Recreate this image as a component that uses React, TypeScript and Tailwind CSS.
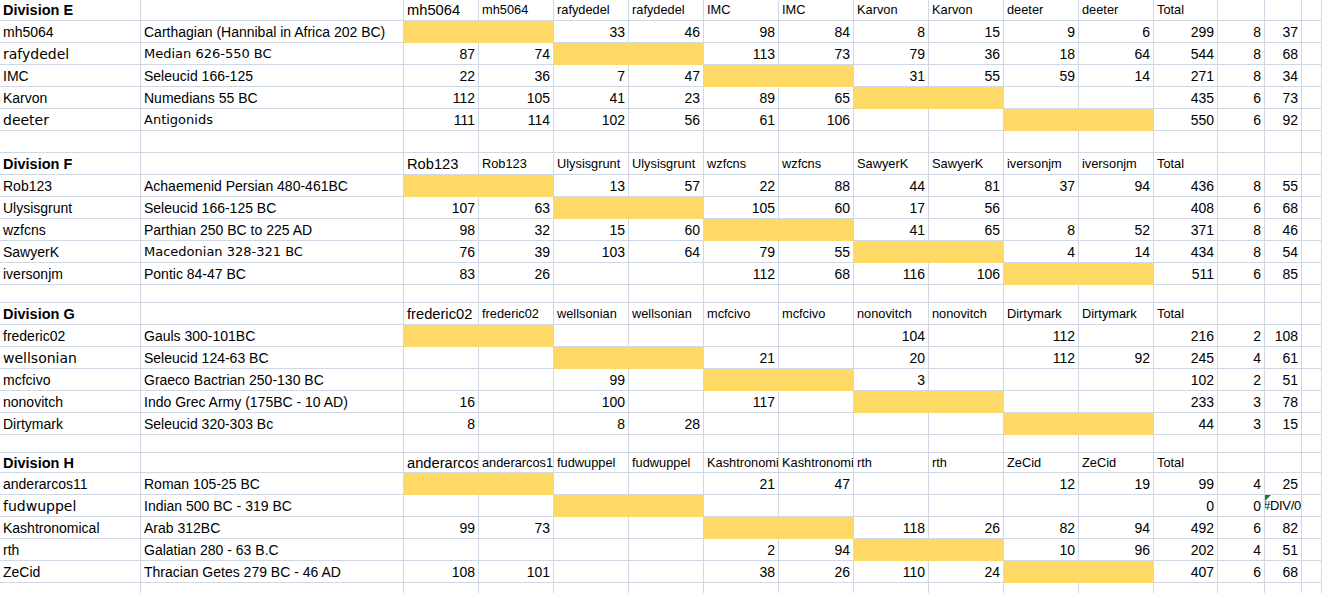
import React from "react";

type Row = {
  name: string;
  army: string;
  vals: (number | null)[];
  total: number;
  n: number;
  avg: number | string;
};

type Block = {
  title: string;
  players: string[];
  headerH: string;
  blankH: string;
  rows: Row[];
};

const ALT_NAME = new Set(["rafydedel", "deeter", "wellsonian", "fudwuppel"]);
const ALT_ARMY = new Set(["Median 626-550 BC", "Antigonids", "Macedonian 328-321 BC"]);

const N = null;

const blocks: Block[] = [
  {
    title: "Division E",
    players: ["mh5064", "rafydedel", "IMC", "Karvon", "deeter"],
    headerH: "h-[21px]",
    blankH: "h-[22px]",
    rows: [
      { name: "mh5064", army: "Carthagian (Hannibal in Africa 202 BC)", vals: [N, N, 33, 46, 98, 84, 8, 15, 9, 6], total: 299, n: 8, avg: 37 },
      { name: "rafydedel", army: "Median 626-550 BC", vals: [87, 74, N, N, 113, 73, 79, 36, 18, 64], total: 544, n: 8, avg: 68 },
      { name: "IMC", army: "Seleucid 166-125", vals: [22, 36, 7, 47, N, N, 31, 55, 59, 14], total: 271, n: 8, avg: 34 },
      { name: "Karvon", army: "Numedians 55 BC", vals: [112, 105, 41, 23, 89, 65, N, N, N, N], total: 435, n: 6, avg: 73 },
      { name: "deeter", army: "Antigonids", vals: [111, 114, 102, 56, 61, 106, N, N, N, N], total: 550, n: 6, avg: 92 },
    ],
  },
  {
    title: "Division F",
    players: ["Rob123", "Ulysisgrunt", "wzfcns", "SawyerK", "iversonjm"],
    headerH: "h-[22px]",
    blankH: "h-[18px]",
    rows: [
      { name: "Rob123", army: "Achaemenid Persian 480-461BC", vals: [N, N, 13, 57, 22, 88, 44, 81, 37, 94], total: 436, n: 8, avg: 55 },
      { name: "Ulysisgrunt", army: "Seleucid 166-125 BC", vals: [107, 63, N, N, 105, 60, 17, 56, N, N], total: 408, n: 6, avg: 68 },
      { name: "wzfcns", army: "Parthian 250 BC to 225 AD", vals: [98, 32, 15, 60, N, N, 41, 65, 8, 52], total: 371, n: 8, avg: 46 },
      { name: "SawyerK", army: "Macedonian 328-321 BC", vals: [76, 39, 103, 64, 79, 55, N, N, 4, 14], total: 434, n: 8, avg: 54 },
      { name: "iversonjm", army: "Pontic 84-47 BC", vals: [83, 26, N, N, 112, 68, 116, 106, N, N], total: 511, n: 6, avg: 85 },
    ],
  },
  {
    title: "Division G",
    players: ["frederic02", "wellsonian", "mcfcivo", "nonovitch", "Dirtymark"],
    headerH: "h-[22px]",
    blankH: "h-[18px]",
    rows: [
      { name: "frederic02", army: "Gauls 300-101BC", vals: [N, N, N, N, N, N, 104, N, 112, N], total: 216, n: 2, avg: 108 },
      { name: "wellsonian", army: "Seleucid 124-63 BC", vals: [N, N, N, N, 21, N, 20, N, 112, 92], total: 245, n: 4, avg: 61 },
      { name: "mcfcivo", army: "Graeco Bactrian 250-130 BC", vals: [N, N, 99, N, N, N, 3, N, N, N], total: 102, n: 2, avg: 51 },
      { name: "nonovitch", army: "Indo Grec Army (175BC - 10 AD)", vals: [16, N, 100, N, 117, N, N, N, N, N], total: 233, n: 3, avg: 78 },
      { name: "Dirtymark", army: "Seleucid 320-303 Bc", vals: [8, N, 8, 28, N, N, N, N, N, N], total: 44, n: 3, avg: 15 },
    ],
  },
  {
    title: "Division H",
    players: ["anderarcos11", "fudwuppel", "Kashtronomical", "rth", "ZeCid"],
    headerH: "h-[20px]",
    blankH: "h-[22px]",
    rows: [
      { name: "anderarcos11", army: "Roman 105-25 BC", vals: [N, N, N, N, 21, 47, N, N, 12, 19], total: 99, n: 4, avg: 25 },
      { name: "fudwuppel", army: "Indian 500 BC - 319 BC", vals: [N, N, N, N, N, N, N, N, N, N], total: 0, n: 0, avg: "#DIV/0!" },
      { name: "Kashtronomical", army: "Arab 312BC", vals: [99, 73, N, N, N, N, 118, 26, 82, 94], total: 492, n: 6, avg: 82 },
      { name: "rth", army: "Galatian 280 - 63 B.C", vals: [N, N, N, N, 2, 94, N, N, 10, 96], total: 202, n: 4, avg: 51 },
      { name: "ZeCid", army: "Thracian Getes 279 BC - 46 AD", vals: [108, 101, N, N, 38, 26, 110, 24, N, N], total: 407, n: 6, avg: 68 },
    ],
  },
];

const GRID =
  "grid grid-cols-[141px_263px_75px_75px_75px_75px_75px_75px_75px_75px_75px_75px_64px_47px_37px_1fr]";

const BASE =
  "relative flex items-center overflow-hidden whitespace-nowrap border-r border-b px-[3px] leading-[16px]";

function Cell({
  children,
  right,
  yellow,
  cls = "",
}: {
  children?: React.ReactNode;
  right?: boolean;
  yellow?: boolean;
  cls?: string;
}) {
  return (
    <div
      className={`${BASE} ${right ? "justify-end" : "justify-start"} ${
        yellow ? "bg-[#ffd966] border-[#ffd966]" : "border-[#d0d7e5]"
      } ${cls}`}
    >
      {children}
    </div>
  );
}

function BlockView({ b }: { b: Block }) {
  const heads: string[] = [];
  b.players.forEach((p) => {
    heads.push(p, p);
  });
  return (
    <>
      <div className={`${GRID} ${b.headerH}`}>
        <Cell cls="font-bold text-[14.5px]">{b.title}</Cell>
        <Cell />
        {heads.map((h, i) => (
          <Cell key={i} cls={i === 0 ? "text-[14.7px]" : "text-[12.8px]"}>
            {h}
          </Cell>
        ))}
        <Cell cls="text-[12.8px]">Total</Cell>
        <Cell />
        <Cell />
        <Cell />
      </div>
      {b.rows.map((r, ri) => (
        <div key={ri} className={`${GRID} h-[22px]`}>
          <Cell
            cls={
              ALT_NAME.has(r.name)
                ? "font-['DejaVu_Sans',sans-serif] text-[14px]"
                : "text-[14px]"
            }
          >
            {r.name}
          </Cell>
          <Cell
            cls={
              ALT_ARMY.has(r.army)
                ? "font-['DejaVu_Sans',sans-serif] text-[13px]"
                : "text-[14px]"
            }
          >
            {r.army}
          </Cell>
          {r.vals.map((v, ci) => {
            const y = ci === ri * 2 || ci === ri * 2 + 1;
            return (
              <Cell key={ci} right yellow={y} cls="text-[14px]">
                {v === null ? "" : v}
              </Cell>
            );
          })}
          <Cell right cls="text-[14px]">{r.total}</Cell>
          <Cell right cls="text-[14px]">{r.n}</Cell>
          {typeof r.avg === "string" ? (
            <Cell cls="text-[13px] !px-0">
              <span className="absolute left-0 top-0 z-10 h-0 w-0 border-t-[6px] border-r-[6px] border-t-[#1e7b1e] border-r-transparent" />
              <span className="-ml-[2px] tracking-[-0.3px]">{r.avg}</span>
            </Cell>
          ) : (
            <Cell right cls="text-[14px]">{r.avg}</Cell>
          )}
          <Cell />
        </div>
      ))}
      <div className={`${GRID} ${b.blankH}`}>
        {Array.from({ length: 16 }).map((_, i) => (
          <Cell key={i} />
        ))}
      </div>
    </>
  );
}

export default function App() {
  return (
    <div className="w-[1322px] h-[593px] overflow-hidden bg-white text-black font-['Liberation_Sans',Arial,sans-serif]">
      {blocks.map((b, i) => (
        <BlockView key={i} b={b} />
      ))}
    </div>
  );
}
